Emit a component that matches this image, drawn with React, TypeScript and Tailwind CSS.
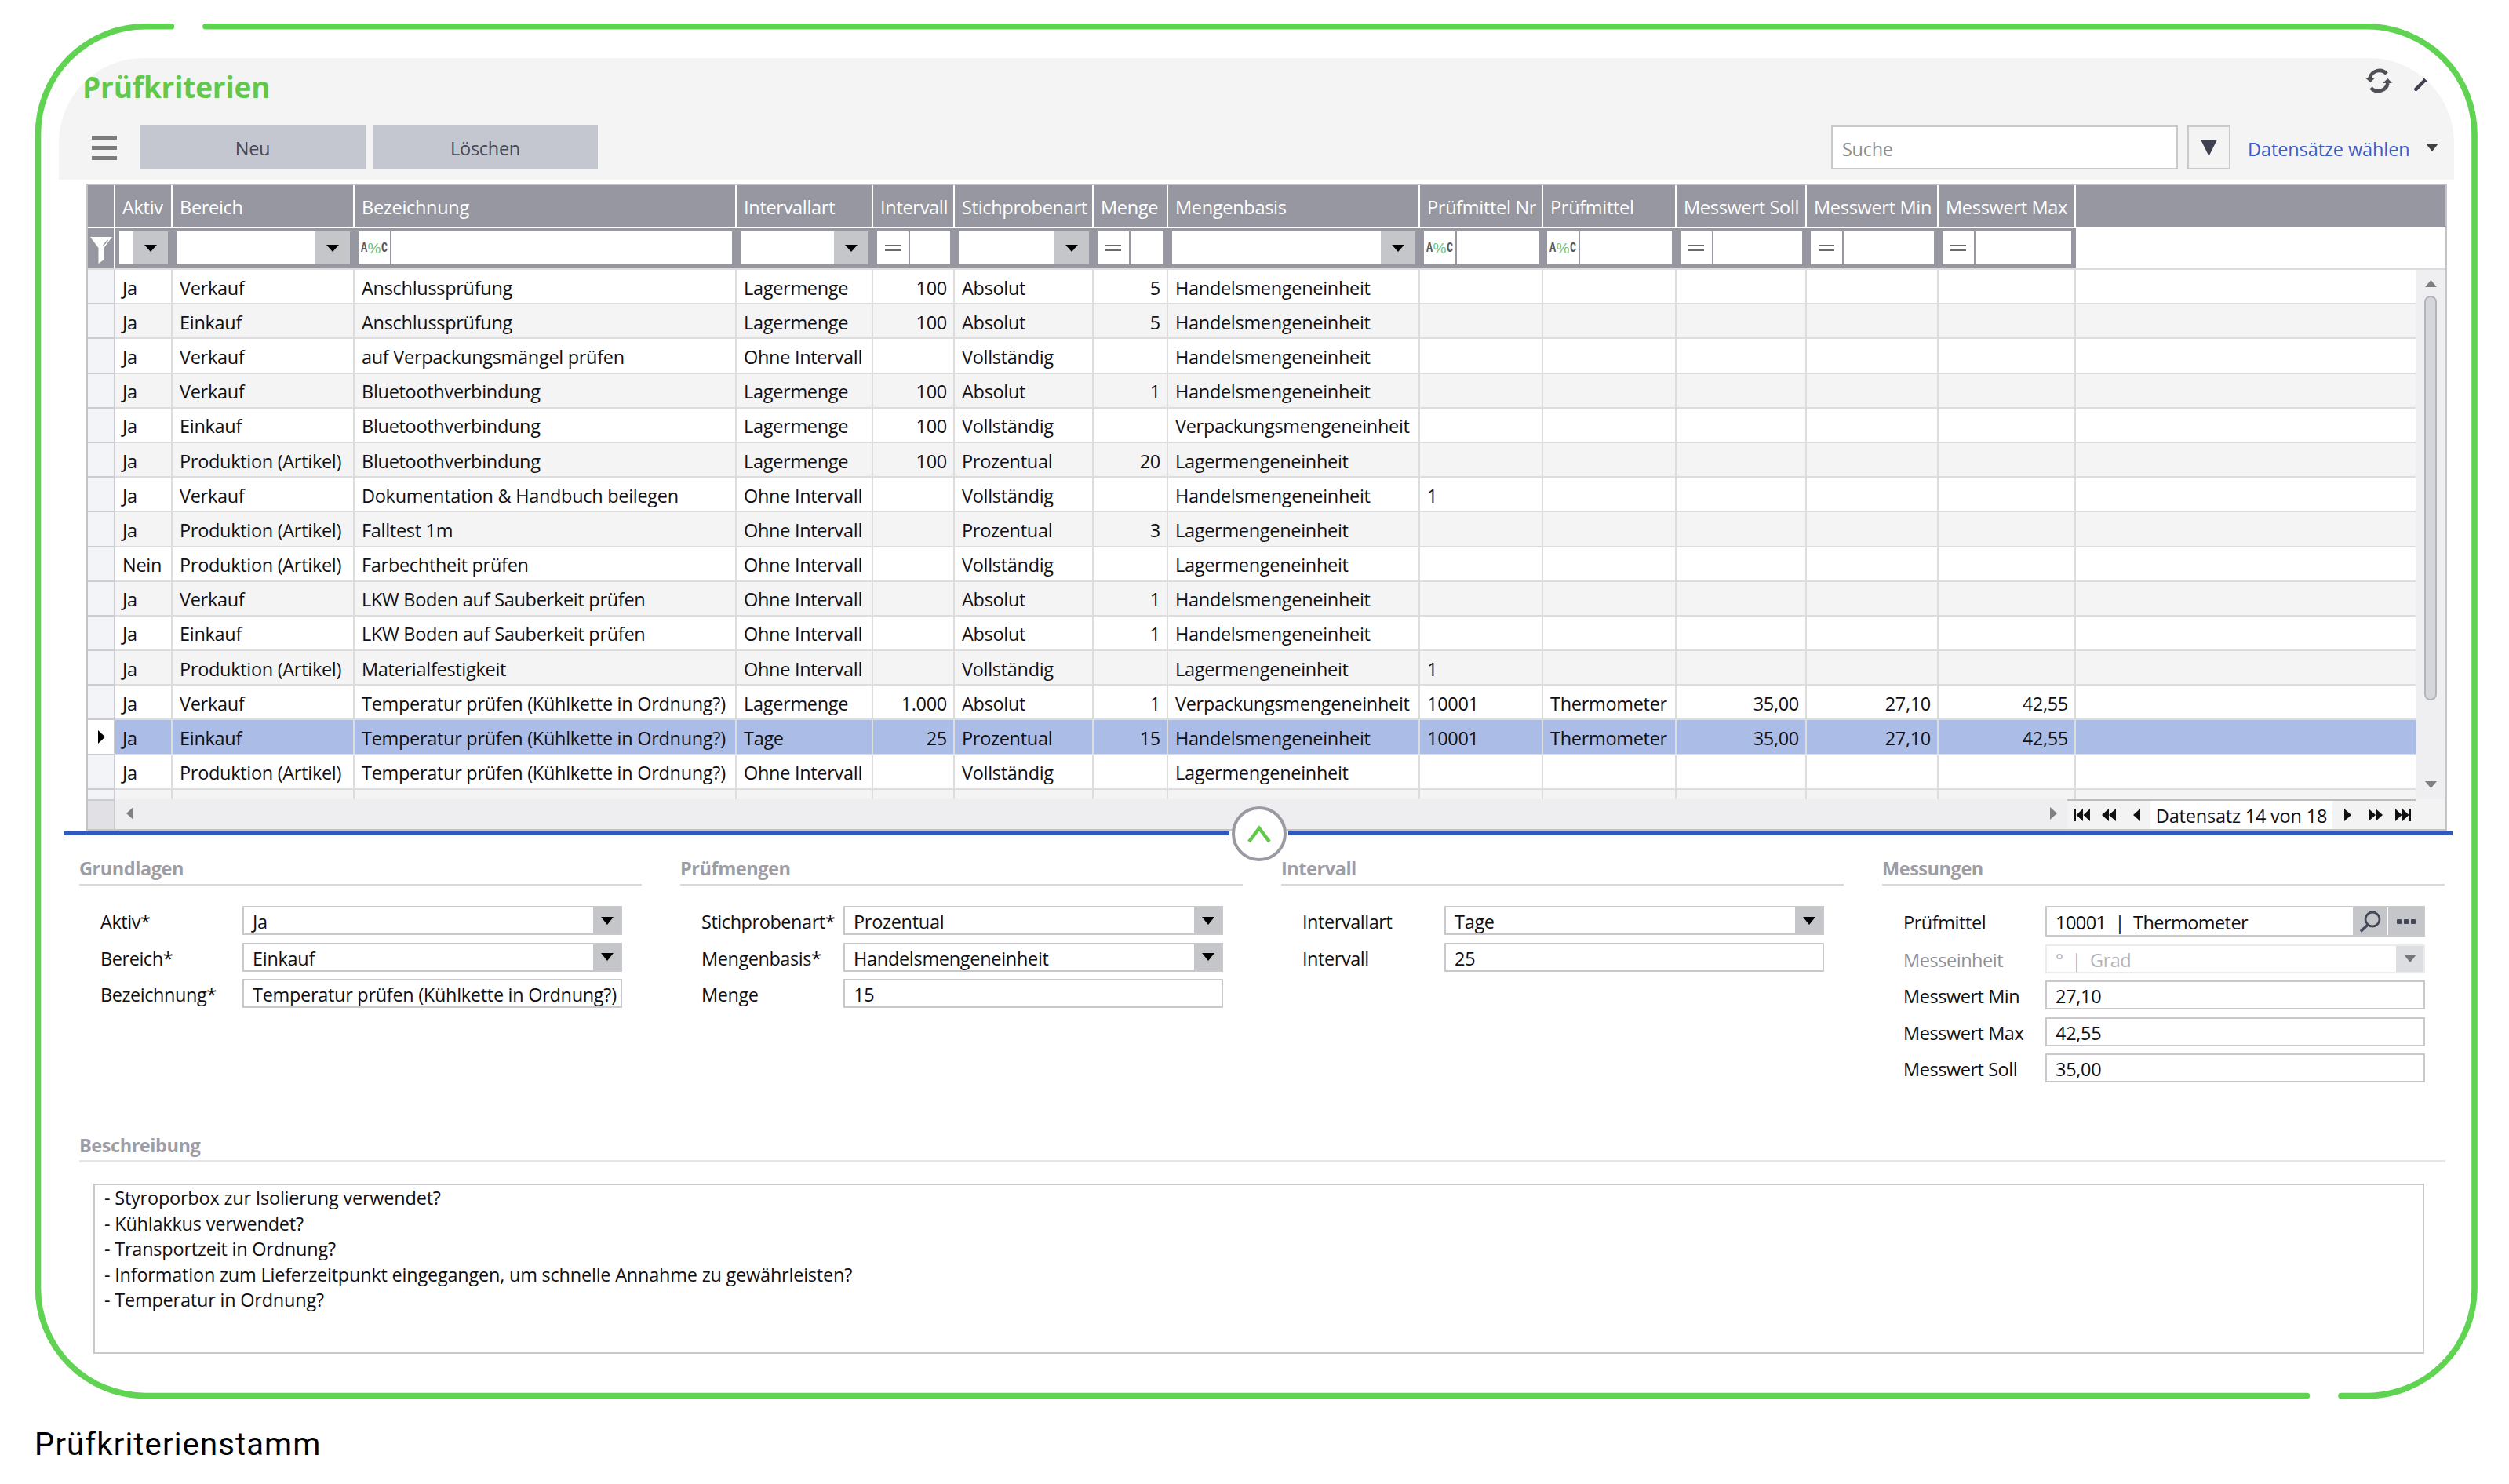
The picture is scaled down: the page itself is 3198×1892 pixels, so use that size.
import type { ReactNode } from "react";

type Filter = "select" | "text" | "number";

const columns: { title: string; width: string; filter: Filter; right?: boolean }[] = [
  { title: "Aktiv", width: "w-[73px]", filter: "select" },
  { title: "Bereich", width: "w-[232px]", filter: "select" },
  { title: "Bezeichnung", width: "w-[487px]", filter: "text" },
  { title: "Intervallart", width: "w-[174px]", filter: "select" },
  { title: "Intervall", width: "w-[104px]", filter: "number", right: true },
  { title: "Stichprobenart", width: "w-[177px]", filter: "select" },
  { title: "Menge", width: "w-[95px]", filter: "number", right: true },
  { title: "Mengenbasis", width: "w-[321px]", filter: "select" },
  { title: "Prüfmittel Nr", width: "w-[157px]", filter: "text" },
  { title: "Prüfmittel", width: "w-[170px]", filter: "text" },
  { title: "Messwert Soll", width: "w-[166px]", filter: "number", right: true },
  { title: "Messwert Min", width: "w-[168px]", filter: "number", right: true },
  { title: "Messwert Max", width: "w-[175px]", filter: "number", right: true },
];

const TEMP = "Temperatur prüfen (Kühlkette in Ordnung?)";

const rows: string[][] = [
  ["Ja", "Verkauf", "Anschlussprüfung", "Lagermenge", "100", "Absolut", "5", "Handelsmengeneinheit"],
  ["Ja", "Einkauf", "Anschlussprüfung", "Lagermenge", "100", "Absolut", "5", "Handelsmengeneinheit"],
  ["Ja", "Verkauf", "auf Verpackungsmängel prüfen", "Ohne Intervall", "", "Vollständig", "", "Handelsmengeneinheit"],
  ["Ja", "Verkauf", "Bluetoothverbindung", "Lagermenge", "100", "Absolut", "1", "Handelsmengeneinheit"],
  ["Ja", "Einkauf", "Bluetoothverbindung", "Lagermenge", "100", "Vollständig", "", "Verpackungsmengeneinheit"],
  ["Ja", "Produktion (Artikel)", "Bluetoothverbindung", "Lagermenge", "100", "Prozentual", "20", "Lagermengeneinheit"],
  ["Ja", "Verkauf", "Dokumentation & Handbuch beilegen", "Ohne Intervall", "", "Vollständig", "", "Handelsmengeneinheit", "1"],
  ["Ja", "Produktion (Artikel)", "Falltest 1m", "Ohne Intervall", "", "Prozentual", "3", "Lagermengeneinheit"],
  ["Nein", "Produktion (Artikel)", "Farbechtheit prüfen", "Ohne Intervall", "", "Vollständig", "", "Lagermengeneinheit"],
  ["Ja", "Verkauf", "LKW Boden auf Sauberkeit prüfen", "Ohne Intervall", "", "Absolut", "1", "Handelsmengeneinheit"],
  ["Ja", "Einkauf", "LKW Boden auf Sauberkeit prüfen", "Ohne Intervall", "", "Absolut", "1", "Handelsmengeneinheit"],
  ["Ja", "Produktion (Artikel)", "Materialfestigkeit", "Ohne Intervall", "", "Vollständig", "", "Lagermengeneinheit", "1"],
  ["Ja", "Verkauf", TEMP, "Lagermenge", "1.000", "Absolut", "1", "Verpackungsmengeneinheit", "10001", "Thermometer", "35,00", "27,10", "42,55"],
  ["Ja", "Einkauf", TEMP, "Tage", "25", "Prozentual", "15", "Handelsmengeneinheit", "10001", "Thermometer", "35,00", "27,10", "42,55"],
  ["Ja", "Produktion (Artikel)", TEMP, "Ohne Intervall", "", "Vollständig", "", "Lagermengeneinheit"],
];

const selectedRow = 13;

function Caret({ className = "h-[9px] w-4 text-black" }: { className?: string }) {
  return (
    <svg viewBox="0 0 16 10" preserveAspectRatio="none" fill="currentColor" className={className}>
      <path d="M0 0h16L8 10z" />
    </svg>
  );
}

function Frame() {
  return (
    <svg
      viewBox="0 0 3198 1892"
      className="pointer-events-none absolute inset-0 h-[1892px] w-[3198px]"
      fill="none"
      stroke="#60d452"
      strokeWidth="7.6"
      strokeLinecap="round"
    >
      <path d="M262 33.8H3017a137 137 0 0 1 137 137V1642.5a137 137 0 0 1-137 137H2984" />
      <path d="M218.5 33.8H185.5a137 137 0 0 0-137 137V1642.5a137 137 0 0 0 137 137H2940.5" />
    </svg>
  );
}

function FilterCell({ type }: { type: Filter }) {
  if (type === "select") {
    return (
      <div className="flex h-[42px] flex-1">
        <div className="flex-1 bg-white" />
        <div className="flex w-11 items-center justify-center bg-[#c5c6ca]">
          <Caret />
        </div>
      </div>
    );
  }
  return (
    <div className="flex h-[42px] flex-1 gap-[2px]">
      <div className="flex w-10 items-center justify-center bg-white">
        {type === "number" ? (
          <div className="h-[8px] w-5 border-y-[2.5px] border-[#6a6a6a]" />
        ) : (
          <div className="flex items-center font-['Liberation_Mono',monospace] text-[18px] leading-none font-bold tracking-normal text-[#5a5a5a]">
            <span className="w-[9px] origin-left scale-x-75">A</span>
            <span className="w-[17px] font-['Liberation_Sans',sans-serif] text-[19px] font-normal text-[#6cc276]">%</span>
            <span className="w-[9px] origin-left scale-x-75">C</span>
          </div>
        )}
      </div>
      <div className="flex-1 bg-white" />
    </div>
  );
}

function Row({ cells, index }: { cells: string[]; index: number }) {
  const selected = index === selectedRow;
  const bg = selected ? "bg-[#abbce6]" : index % 2 ? "bg-[#f4f4f4]" : "bg-white";
  return (
    <div className="flex h-[44.2px] w-[2967px]">
      <div
        className={`flex w-[35px] shrink-0 items-center justify-center border-r-2 border-b-2 border-[#cbccd0] ${
          selected ? "bg-white" : "bg-[#f3f4f8]"
        }`}
      >
        {selected && (
          <svg viewBox="0 0 9 17" className="ml-[2px] h-[17px] w-[9px]">
            <path d="M0 0l9 8.5L0 17z" />
          </svg>
        )}
      </div>
      {columns.map((col, i) => (
        <div
          key={col.title}
          className={`flex shrink-0 items-center border-r-2 border-b-2 border-[#dddddd] pt-[3px] pr-[8px] pl-[9px] whitespace-nowrap ${bg} ${col.width} ${
            col.right ? "justify-end" : ""
          }`}
        >
          {cells[i]}
        </div>
      ))}
      <div className={`flex-1 border-b-2 border-[#dddddd] ${bg}`} />
    </div>
  );
}

function Nav({ d, width, className = "" }: { d: string; width: number; className?: string }) {
  return (
    <svg viewBox={`0 0 ${width} 16`} width={width} height="16" fill="currentColor" className={`shrink-0 ${className}`}>
      <path d={d} />
    </svg>
  );
}

function Table() {
  return (
    <div className="ml-[35px] flex h-[825px] w-[3009px] flex-col border-2 border-[#c4c4c6]">
      <div className="flex h-[53px] bg-[#9697a0] text-white">
        <div className="w-[35px] shrink-0 border-r-2 border-white" />
        {columns.map((col) => (
          <div
            key={col.title}
            className={`flex shrink-0 items-center border-r-2 border-white pt-[3px] pl-[9px] whitespace-nowrap ${col.width}`}
          >
            {col.title}
          </div>
        ))}
      </div>
      <div className="flex h-[55px] border-b-2 border-[#dddddd]">
        <div className="flex w-[35px] shrink-0 border-t-2 border-r-2 border-white bg-[#9697a0]">
          <svg viewBox="0 0 28 34" className="mt-[11px] ml-[3px] h-[34px] w-7">
            <path d="M0 0h28L17.5 14v15L10.5 34V14z" fill="#fff" />
            <path d="M22.5 4l-6 7" stroke="#9697a0" strokeWidth="1.3" fill="none" />
          </svg>
        </div>
        {columns.map((col) => (
          <div
            key={col.title}
            className={`flex shrink-0 border-t-2 border-white bg-[#9697a0] pt-1 pr-[6px] pl-[5px] ${col.width}`}
          >
            <FilterCell type={col.filter} />
          </div>
        ))}
      </div>
      <div className="flex h-[675px]">
        <div className="h-full w-[2967px] overflow-hidden">
          {rows.map((cells, i) => (
            <Row key={i} cells={cells} index={i} />
          ))}
          <Row cells={[]} index={15} />
        </div>
        <div className="flex flex-1 flex-col items-center bg-[#efeff2]">
          <Caret className="mt-[13px] h-[9px] w-[15px] rotate-180 text-[#808080]" />
          <div className="mt-[11px] h-[516px] w-4 rounded-full border-2 border-[#b3b4ba] bg-[#d5d6db]" />
          <Caret className="mt-[103px] h-[9px] w-[15px] text-[#808080]" />
        </div>
      </div>
      <div className="flex h-[38px] bg-[#eeeef0]">
        <div className="w-[35px] border-t-2 border-r-2 border-[#cbccd0] bg-[#e0e0e5]" />
        <Nav d="M9 0v16L0 8z" width={9} className="mt-[10px] ml-[14px] text-[#808080]" />
        <Nav d="M0 0v16l9-8z" width={9} className="mt-[10px] ml-auto text-[#808080]" />
        <div className="ml-[13px] flex w-[444px] items-center border-t-2 border-[#bdbdbf] bg-[#f3f3f4]">
          <Nav d="M0 0h2v16H0zM11 0v16L2.5 8zM20 0v16L11.5 8z" width={20} className="ml-[9px]" />
          <Nav d="M9 0v16L0 8zM18 0v16L9 8z" width={18} className="ml-[15px]" />
          <Nav d="M9 0v16L0 8z" width={9} className="ml-[22px]" />
          <div className="ml-[13px] flex h-full w-[232px] items-center justify-center bg-white pt-[2px] tracking-[-0.2px] whitespace-nowrap">
            Datensatz 14 von 18
          </div>
          <Nav d="M0 0v16l9-8z" width={9} className="ml-[15px]" />
          <Nav d="M0 0v16l9-8zM9 0v16l9-8z" width={18} className="ml-[22px]" />
          <Nav d="M0 0v16l8.5-8zM9 0v16l8.5-8zM18 0h2v16h-2z" width={20} className="ml-[16px]" />
        </div>
        <div className="w-[38px] bg-[#f3f3f4]" />
      </div>
    </div>
  );
}

function SectionTitle({ children }: { children: ReactNode }) {
  return <div className="h-8 leading-8 font-bold tracking-[-0.45px] text-[#9c9da5]">{children}</div>;
}

function Section({ title, children }: { title: string; children: ReactNode }) {
  return (
    <div className="w-[717px]">
      <SectionTitle>{title}</SectionTitle>
      <div className="mt-1 h-[2px] bg-[#d9d9d9]" />
      <div className="mt-[26px] flex flex-col gap-[9.6px] pl-[27px]">{children}</div>
    </div>
  );
}

type FieldProps = { label: string; value: string; kind?: "text" | "select" | "lookup"; disabled?: boolean };

function Field({ label, value, kind = "text", disabled = false }: FieldProps) {
  return (
    <div className={`flex items-center ${kind === "lookup" ? "h-[39px]" : "h-[37px]"}`}>
      <div
        className={`w-[181px] pt-[3px] tracking-[-0.45px] whitespace-nowrap ${disabled ? "text-[#909096]" : ""}`}
      >
        {label}
      </div>
      <div className={`flex h-full w-[484px] border-2 bg-white ${disabled ? "border-[#ececee]" : "border-[#c9c9cb]"}`}>
        <div
          className={`flex flex-1 items-center pt-[3px] pl-[11px] whitespace-pre ${disabled ? "text-[#b4b4bb]" : ""} ${
            kind === "lookup" || disabled ? "tracking-[-0.55px]" : ""
          }`}
        >
          {value}
        </div>
        {kind === "select" && (
          <div className={`flex w-[35px] items-center justify-center ${disabled ? "bg-[#dddee1]" : "bg-[#c5c6ca]"}`}>
            <Caret className={`h-[10px] w-4 ${disabled ? "text-[#75757a]" : "text-black"}`} />
          </div>
        )}
        {kind === "lookup" && (
          <div className="flex gap-[2px]">
            <div className="flex w-[43px] items-center justify-center bg-[#c5c6ca]">
              <svg viewBox="0 0 28 28" className="h-7 w-7" fill="none" stroke="#444856" strokeWidth="2.8">
                <circle cx="17" cy="11" r="9" />
                <path d="M11 18L2 26.5" strokeWidth="3.4" />
              </svg>
            </div>
            <div className="flex w-[45px] items-center justify-center gap-[3px] bg-[#c5c6ca]">
              <div className="size-[6px] rounded-[1px] bg-[#444856]" />
              <div className="size-[6px] rounded-[1px] bg-[#444856]" />
              <div className="size-[6px] rounded-[1px] bg-[#444856]" />
            </div>
          </div>
        )}
      </div>
    </div>
  );
}

function Header() {
  return (
    <div className="h-[155px] overflow-hidden rounded-t-[108px] bg-[#f4f4f4]">
      <div className="flex h-[86px] items-start justify-between">
        <h1 className="mt-[15px] ml-[30px] text-[37px] leading-[44px] font-bold tracking-[-0.2px] text-[#62c84c]">
          Prüfkriterien
        </h1>
        <div className="flex">
          <svg viewBox="0 0 34 34" className="mt-3 h-[34px] w-[34px]" fill="none" stroke="#505156" strokeWidth="4.6">
            <path d="M27 8A12.500 12.500 0 0 0 5.500 14" />
            <path d="M7 26a12.500 12.500 0 0 0 21.500-6" />
            <path d="M0 13.500h12L6.500 19z" fill="#505156" stroke="none" />
            <path d="M22 20h12l-5.500-6z" fill="#505156" stroke="none" />
          </svg>
          <svg viewBox="0 0 50 40" className="mt-[18px] mr-[3px] ml-[26px] h-10 w-[50px]" fill="#3d4150">
            <path d="M2 21L14 9 12 4l8-4 10 14-8-1-5-1L6 23.500a2.500 2.500 0 0 1-4-2.500z" />
          </svg>
        </div>
      </div>
      <div className="flex h-14 items-center pl-[42px]">
        <div className="flex w-8 flex-col gap-[8px]">
          <div className="h-[5px] bg-[#7b7b7b]" />
          <div className="h-[5px] bg-[#7b7b7b]" />
          <div className="h-[5px] bg-[#7b7b7b]" />
        </div>
        <button className="ml-[29px] h-14 w-[288px] bg-[#c5c7d0] pt-[2px] text-[#444856]">Neu</button>
        <button className="ml-[9px] h-14 w-[287px] bg-[#c5c7d0] pt-[2px] text-[#444856]">Löschen</button>
        <div className="ml-auto flex h-14 w-[442px] items-center border-2 border-[#c9c9cb] bg-white pt-[3px] pl-3 text-[#8c8c8c]">
          Suche
        </div>
        <div className="ml-[12px] flex h-14 w-[55px] items-center justify-center border-2 border-[#c9c9cb]">
          <Caret className="h-[21px] w-[21px] text-[#3d4150]" />
        </div>
        <div className="ml-[22px] w-[207px] pt-[3px] tracking-[-0.1px] whitespace-nowrap text-[#3b5cc6]">
          Datensätze wählen
        </div>
        <Caret className="mr-[20px] ml-[20px] h-[10px] w-4 text-[#404040]" />
      </div>
    </div>
  );
}

const checks = [
  "- Styroporbox zur Isolierung verwendet?",
  "- Kühlakkus verwendet?",
  "- Transportzeit in Ordnung?",
  "- Information zum Lieferzeitpunkt eingegangen, um schnelle Annahme zu gewährleisten?",
  "- Temperatur in Ordnung?",
];

export default function App() {
  return (
    <div className="relative h-[1892px] w-[3198px] overflow-hidden bg-white pt-[74px] font-['Open_Sans',sans-serif] text-[23.5px] leading-8 tracking-[-0.3px] text-[#101014]">
      <Frame />
      <div className="ml-[75px] flex h-[1743px] w-[3053px] flex-col">
        <Header />
        <div className="h-[5px]" />
        <Table />
        <div className="relative mt-[1px] ml-[6px] h-[5px] w-[3045px] bg-[#3058c2]">
          <div className="absolute top-[-35px] left-[1486px] flex size-[75px] items-center justify-center">
            <div className="absolute inset-x-0 top-[34px] h-[7px] bg-white" />
            <div className="relative flex size-[70px] items-center justify-center rounded-full border-4 border-[#9a9ba2] bg-white">
              <svg viewBox="0 0 30 22" className="h-[22px] w-[30px]" fill="none" stroke="#62c84c" strokeWidth="4.5">
                <path d="M2 21L15 4l13 17" />
              </svg>
            </div>
          </div>
        </div>
        <div className="mt-[26px] ml-[26px] flex h-[290px] gap-[49px]">
          <Section title="Grundlagen">
            <Field label="Aktiv*" value="Ja" kind="select" />
            <Field label="Bereich*" value="Einkauf" kind="select" />
            <Field label="Bezeichnung*" value={TEMP} />
          </Section>
          <Section title="Prüfmengen">
            <Field label="Stichprobenart*" value="Prozentual" kind="select" />
            <Field label="Mengenbasis*" value="Handelsmengeneinheit" kind="select" />
            <Field label="Menge" value="15" />
          </Section>
          <Section title="Intervall">
            <Field label="Intervallart" value="Tage" kind="select" />
            <Field label="Intervall" value="25" />
          </Section>
          <Section title="Messungen">
            <Field label="Prüfmittel" value="10001  |  Thermometer" kind="lookup" />
            <Field label="Messeinheit" value="°  |  Grad" kind="select" disabled />
            <Field label="Messwert Min" value="27,10" />
            <Field label="Messwert Max" value="42,55" />
            <Field label="Messwert Soll" value="35,00" />
          </Section>
        </div>
        <div className="mt-[63px] ml-[26px] w-[3016px]">
          <SectionTitle>Beschreibung</SectionTitle>
          <div className="mt-[3px] h-[3px] bg-[#e6e6e6]" />
          <div className="mt-[27px] ml-[18px] h-[217px] w-[2971px] border-2 border-[#c9c9cb] bg-white pl-[12px] leading-[32.5px] tracking-[-0.22px]">
            {checks.map((line) => (
              <div key={line}>{line}</div>
            ))}
          </div>
        </div>
      </div>
      <p className="ml-[44px] pt-[1px] font-['Roboto',sans-serif] text-[40px] leading-[48px] tracking-[1.15px] text-black">
        Prüfkriterienstamm
      </p>
    </div>
  );
}
